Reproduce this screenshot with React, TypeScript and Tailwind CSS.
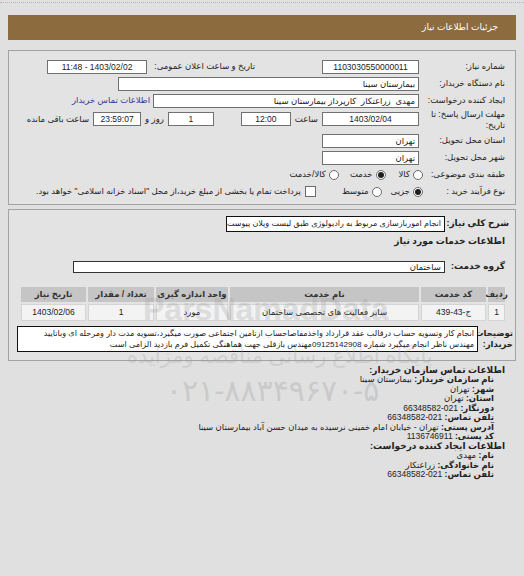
import React from 'react'
import clsx from 'clsx'

// small building blocks used by the form rows
function Field({ className, children }: { className?: string; children?: React.ReactNode }) {
  return (
    <div
      className={clsx(
        'h-[14px] shrink-0 overflow-hidden whitespace-nowrap border border-[#707070] bg-white px-[3px] leading-[12px] text-[#222]',
        className
      )}
    >
      {children}
    </div>
  )
}

function Radio({ checked }: { checked?: boolean }) {
  return (
    <span className="flex h-[10px] w-[10px] shrink-0 items-center justify-center rounded-full border border-[#6b6b6b] bg-white">
      {checked && <span className="h-[6px] w-[6px] rounded-full bg-[#1f1f1f]" />}
    </span>
  )
}

function Label({ children, className }: { children: React.ReactNode; className?: string }) {
  return <div className={clsx('w-[80px] shrink-0 whitespace-nowrap', className)}>{children}</div>
}

const columns = [
  { title: 'ردیف', value: '1', w: 'w-[17px]' },
  { title: 'کد خدمت', value: 'ج-43-439', w: 'w-[65px]' },
  { title: 'نام خدمت', value: 'سایر فعالیت های تخصصی ساختمان', w: 'w-[189px]' },
  { title: 'واحد اندازه گیری', value: 'مورد', w: 'w-[72px]' },
  { title: 'تعداد / مقدار', value: '1', w: 'w-[66px]' },
  { title: 'تاریخ نیاز', value: '1403/02/06', w: 'w-[65px]' },
]

const contact: { label: string; value?: string; head?: boolean }[] = [
  { label: 'اطلاعات تماس سازمان خریدار:', head: true },
  { label: 'نام سازمان خریدار:', value: 'بیمارستان سینا' },
  { label: 'شهر:', value: 'تهران' },
  { label: 'استان:', value: 'تهران' },
  { label: 'دورنگار:', value: '021-66348582' },
  { label: 'تلفن تماس:', value: '021-66348582' },
  { label: 'آدرس پستی:', value: 'تهران - خیابان امام خمینی نرسیده به میدان حسن آباد بیمارستان سینا' },
  { label: 'کد پستی:', value: '1136746911' },
  { label: 'اطلاعات ایجاد کننده درخواست:', head: true },
  { label: 'نام:', value: 'مهدی' },
  { label: 'نام خانوادگی:', value: 'زراعتکار' },
  { label: 'تلفن تماس:', value: '021-66348582' },
]

export default function App() {
  return (
    <div
      dir="rtl"
      className="relative min-h-[576px] overflow-hidden bg-[#e0e0e0] font-['Liberation_Sans','DejaVu_Sans',sans-serif] text-[8.5px] text-[#222]"
    >
      <div className="h-[3px] border-b border-dotted border-[#b5b5b5]" />

      <div className="px-[8px] pt-[12px]">
        {/* title bar */}
        <div className="flex h-[25px] items-center bg-[#8c6b3e] pr-[18px] text-[9px] text-white">
          جزئیات اطلاعات نیاز
        </div>

        {/* section 1 */}
        <div className="mt-[10px] border border-[#a3a3a3] bg-[#e3e3e3] pb-[4px] pr-[10px] pt-[7px]">
          <div className="flex h-[17px] items-center">
            <Label>شماره نیاز:</Label>
            <Field className="mr-[6px] w-[97px] text-center">1103030550000011</Field>
            <div className="mr-[67px] w-[103px] shrink-0 whitespace-nowrap">تاریخ و ساعت اعلان عمومی:</div>
            <Field className="mr-[5px] w-[100px] text-center">1403/02/02 - 11:48</Field>
          </div>

          <div className="flex h-[17px] items-center">
            <Label>نام دستگاه خریدار:</Label>
            <Field className="mr-[6px] w-[301px]">بیمارستان سینا</Field>
          </div>

          <div className="flex h-[17px] items-center">
            <Label>ایجاد کننده درخواست:</Label>
            <Field className="mr-[6px] w-[266px]">مهدی&nbsp; زراعتکار&nbsp; کارپرداز بیمارستان سینا</Field>
            <a className="mr-[3px] whitespace-nowrap text-[#2d3b9c]">اطلاعات تماس خریدار</a>
          </div>

          <div className="flex h-[23px] items-start">
            <Label className="leading-[11px]">
              مهلت ارسال پاسخ: تا
              <br />
              تاریخ:
            </Label>
            <Field className="mr-[6px] mt-[3px] w-[97px] text-center">1403/02/04</Field>
            <div className="mr-[4px] mt-[3px] whitespace-nowrap leading-[14px]">ساعت</div>
            <Field className="mr-[4px] mt-[3px] w-[50px] text-center">12:00</Field>
            <Field className="mr-[27px] mt-[3px] w-[46px] text-center">1</Field>
            <div className="mr-[4px] mt-[3px] whitespace-nowrap leading-[14px]">روز و</div>
            <Field className="mr-[4px] mt-[3px] w-[48px] bg-[#ffffe3] text-center text-[#7a7a7a]">23:59:07</Field>
            <div className="mr-[4px] mt-[3px] whitespace-nowrap leading-[14px]">ساعت باقی مانده</div>
          </div>

          <div className="flex h-[17px] items-center">
            <Label>استان محل تحویل:</Label>
            <Field className="mr-[6px] w-[97px]">تهران</Field>
          </div>

          <div className="flex h-[17px] items-center">
            <Label>شهر محل تحویل:</Label>
            <Field className="mr-[6px] w-[97px]">تهران</Field>
          </div>

          <div className="flex h-[17px] items-center">
            <Label>طبقه بندی موضوعی:</Label>
            <div className="mr-[2px] flex items-center whitespace-nowrap">
              <Radio />
              <span className="mr-[3px]">کالا</span>
              <span className="mr-[13px]"><Radio checked /></span>
              <span className="mr-[3px]">خدمت</span>
              <span className="mr-[11px]"><Radio /></span>
              <span className="mr-[3px]">کالا/خدمت</span>
            </div>
          </div>

          <div className="flex h-[17px] items-center">
            <Label>نوع فرآیند خرید :</Label>
            <div className="mr-[2px] flex items-center whitespace-nowrap">
              <Radio checked />
              <span className="mr-[3px]">جزیی</span>
              <span className="mr-[9px]"><Radio /></span>
              <span className="mr-[3px]">متوسط</span>
              <span className="mr-[26px] h-[11px] w-[11px] shrink-0 border border-[#6b6b6b] bg-white" />
              <span className="mr-[4px]">پرداخت تمام یا بخشی از مبلغ خرید،از محل "اسناد خزانه اسلامی" خواهد بود.</span>
            </div>
          </div>
        </div>

        {/* section 2 */}
        <div className="mt-[4px] border border-[#a3a3a3] bg-[#e3e3e3] pb-[8px] pl-[12px] pr-[10px] pt-[4px]">
          <div className="-mr-[4px] flex h-[20px] items-center">
            <div className="w-[60px] shrink-0 whitespace-nowrap text-[9px] font-bold">شرح کلی نیاز:</div>
            <div className="mr-[4px] flex h-[16px] w-[219px] shrink-0 items-center overflow-hidden whitespace-nowrap border border-[#111] bg-white px-[3px] text-[8px]">
              انجام اموربازسازی مربوط به رادیولوژی طبق لیست وپلان پیوست
            </div>
          </div>

          <div className="flex h-[16px] items-center whitespace-nowrap text-[9px] font-bold">اطلاعات خدمات مورد نیاز</div>

          <div className="mt-[7px] flex h-[19px] items-center">
            <div className="w-[54px] shrink-0 whitespace-nowrap text-[9px] font-bold">گروه خدمت:</div>
            <div className="mr-[6px] flex h-[12px] w-[372px] shrink-0 items-center border border-[#333] bg-white px-[3px] leading-[10px]">
              ساختمان
            </div>
          </div>

          <div className="mt-[11px] flex gap-[2px]">
            {columns.map((c) => (
              <div key={c.title} className={clsx('flex h-[15px] shrink-0 items-center justify-center whitespace-nowrap bg-[#c5c5c5] font-bold text-[#333]', c.w)}>
                {c.title}
              </div>
            ))}
          </div>
          <div className="mt-[2px] flex gap-[2px]">
            {columns.map((c) => (
              <div key={c.title} className={clsx('flex h-[17px] shrink-0 items-center justify-center whitespace-nowrap border border-[#d4d4d4] bg-[#f3f3f3]', c.w)}>
                {c.value}
              </div>
            ))}
          </div>

          <div className="-mr-[8px] mt-[5px] flex items-start">
            <div className="w-[35px] shrink-0 pt-[2px] text-[8.5px] font-bold leading-[11px]">
              توضیحات
              <br />
              خریدار:
            </div>
            <div className="h-[26px] w-[461px] shrink-0 overflow-hidden border border-[#111] bg-white px-[3px] pt-[1px] text-[8.1px] leading-[11px]">
              <div className="whitespace-nowrap">انجام کار وتسویه حساب درقالب عقد قرارداد واخذمفاصاحساب ازتامین اجتماعی صورت میگیرد،تسویه مدت دار ومرحله ای وباتایید</div>
              <div className="whitespace-nowrap">مهندس ناظر انجام میگیرد شماره 09125142908مهندس بازقلی جهت هماهنگی تکمیل فرم بازدید الزامی است</div>
            </div>
          </div>
        </div>

        {/* contact info */}
        <div className="mt-[5px] leading-[9.45px]">
          {contact.map((c, i) => (
            <div key={i} className={clsx('whitespace-nowrap', c.head ? 'pr-[11px] text-[9px] font-bold' : 'pr-[22px]')}>
              <span className="font-bold">{c.label}</span>
              {c.value && <span> {c.value}</span>}
            </div>
          ))}
        </div>
      </div>

      {/* watermark laid over the page */}
      <div className="pointer-events-none absolute left-[143px] top-[293px] font-['Liberation_Sans',sans-serif] text-[32px] font-bold leading-none text-[#9a9a9a] opacity-25">
        ParsNamadData
      </div>
      <div className="pointer-events-none absolute left-[127px] top-[345px] whitespace-nowrap text-[21px] leading-none text-[#9a9a9a] opacity-25">
        پایگاه اطلاع رسانی مناقصه ومزایده
      </div>
      <div dir="ltr" className="pointer-events-none absolute left-[166px] top-[376px] whitespace-nowrap text-[30px] leading-none text-[#9a9a9a] opacity-30">
        ۰۲۱-۸۸۳۴۹۶۷۰-۵
      </div>
    </div>
  )
}
